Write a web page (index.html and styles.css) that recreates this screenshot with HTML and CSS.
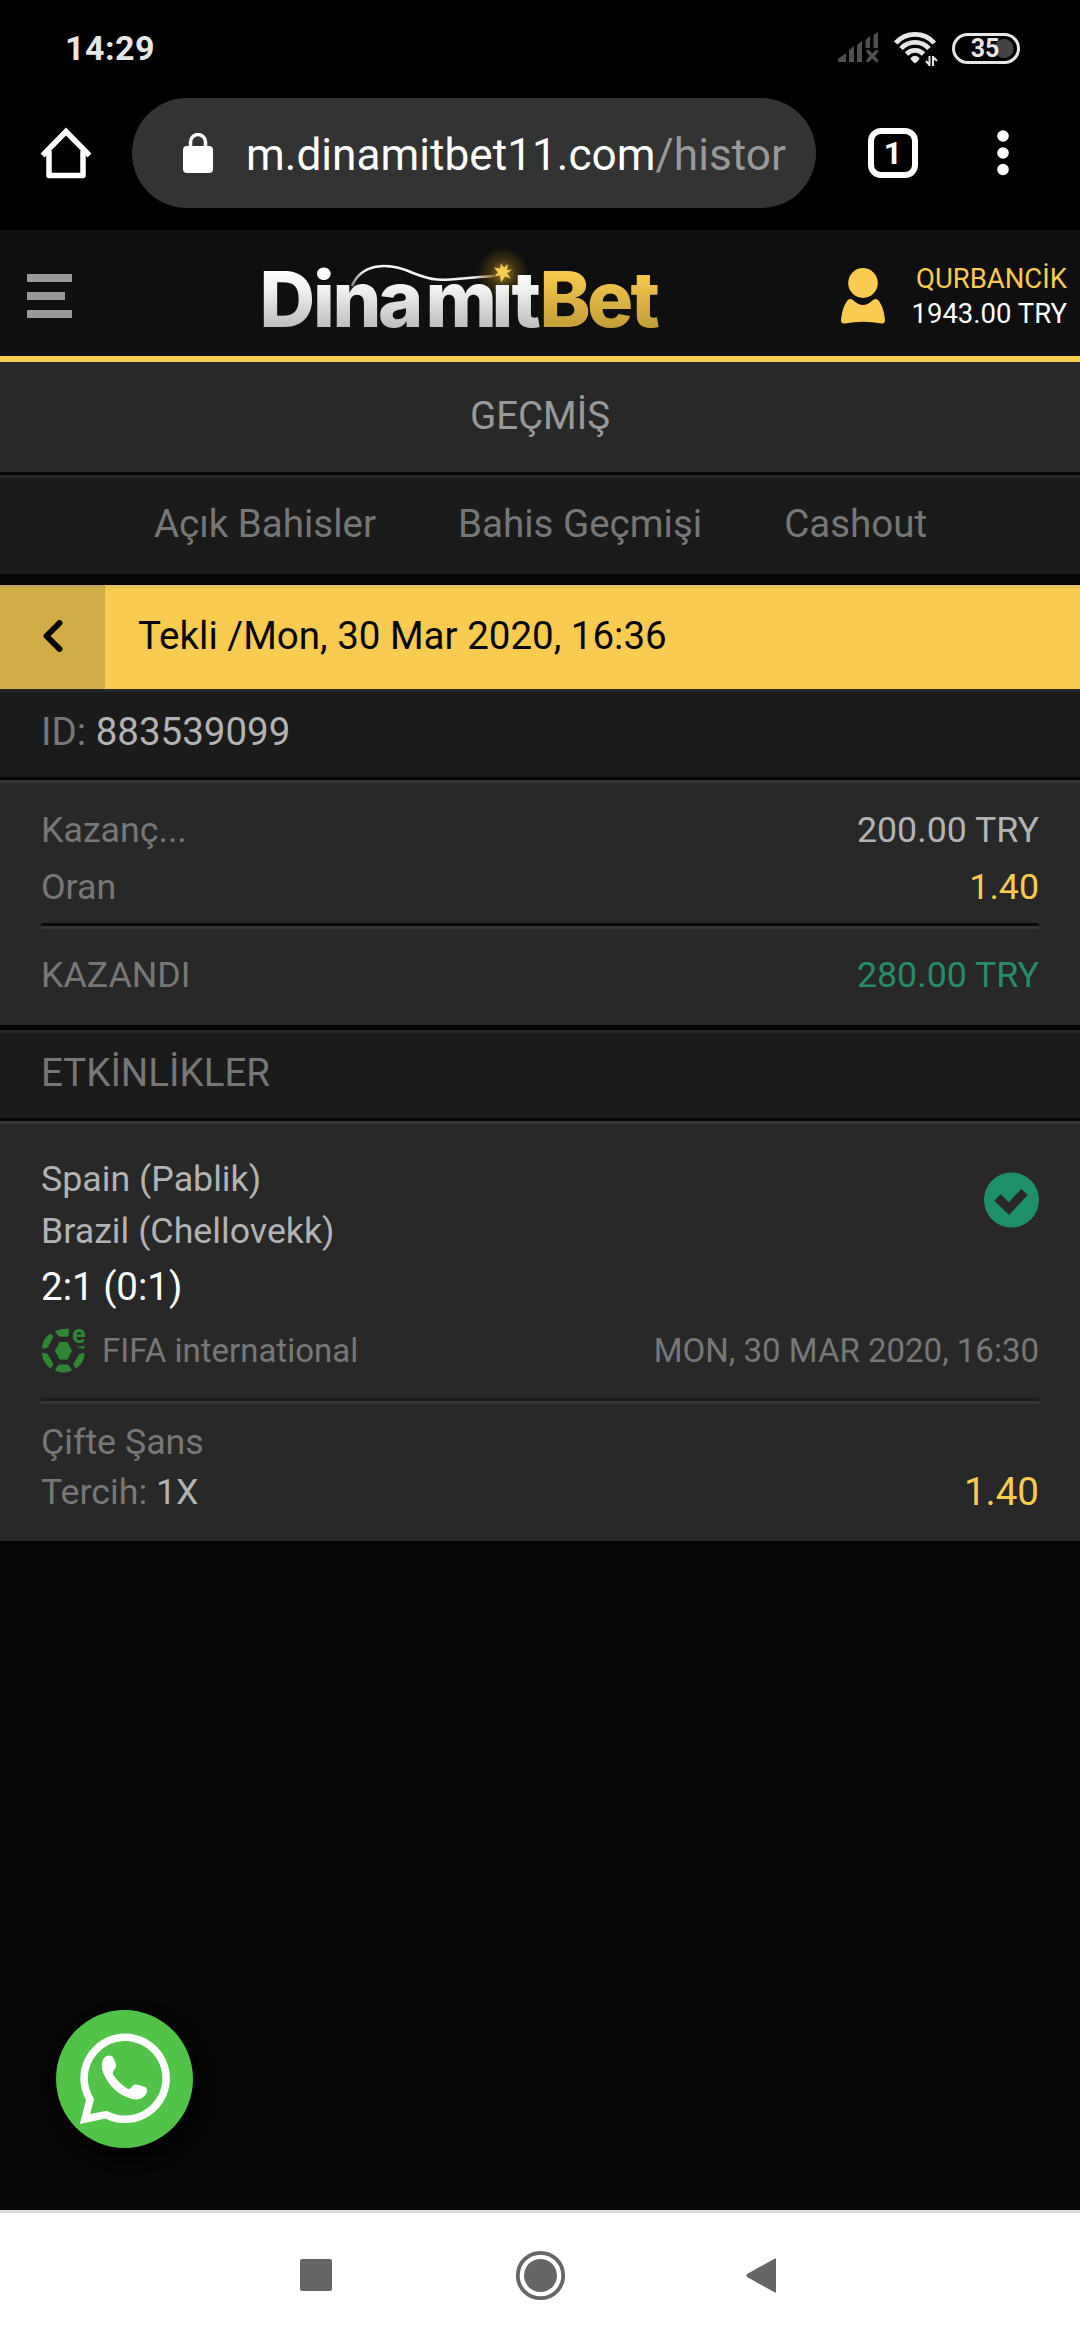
FILE: index.html
```html
<!DOCTYPE html>
<html lang="tr">
<head>
	<meta charset="utf-8">
	<title>DinamitBet</title>
	<link rel="stylesheet" href="styles.css">
</head>

<body>
	<div class="status-bar">
		<span class="clock">14:29</span>
		<div class="status-icons">
			<svg class="signal" width="42" height="32" viewBox="0 0 42 32">
				<path fill="#505050" d="M0 30v-3l8-6v9zM11 30V18l5-4v16zM19 30V13l5-4v21zM27.500 16V8l4.500-4v12zM35.500 16V3L40 0v16z"/>
				<path stroke="#505050" stroke-width="3.400" stroke-linecap="round" d="M30 19.500l8.500 9M38.500 19.500l-8.500 9"/>
			</svg>
			<svg class="wifi" width="44" height="36" viewBox="0 0 44 36">
				<g fill="none" stroke="#e6e6e6" stroke-width="4.800">
					<path d="M1.700 12a26 26 0 0 1 38.600 0"/>
					<path d="M7 17.500a19 19 0 0 1 28 0"/>
					<path d="M12.500 23a12 12 0 0 1 17 0"/>
				</g>
				<path fill="#e6e6e6" d="M16.500 27q4.500-4.500 9 0q0 2-4.500 5.500q-4.500-3.500-4.500-5.500z"/>
				<path fill="none" stroke="#e6e6e6" stroke-width="2" d="M35.500 25v10M35.500 34l-3.500-4M39 35V25M39 26l4 4"/>
			</svg>
			<span class="battery">35</span>
		</div>
	</div>

	<div class="browser-bar">
		<svg class="home" width="52" height="52" viewBox="0 0 52 52" fill="none" stroke="#fff" stroke-width="5.500" stroke-linejoin="round">
			<path d="M9 24v24.500h34V24"/>
			<path stroke-linejoin="miter" d="M2.500 28.500L26 4.500l23.500 24"/>
		</svg>
		<div class="url">
			<svg class="lock" width="30" height="40" viewBox="0 0 30 40">
				<rect y="13" width="30" height="27" rx="4" fill="#fff"/>
				<path d="M7.500 15V9a7.500 7.500 0 0 1 15 0v6" fill="none" stroke="#fff" stroke-width="3.500"/>
			</svg>
			<span class="address">m.dinamitbet11.com<span class="path">/histor</span></span>
		</div>
		<span class="tab-count">1</span>
		<svg class="more" width="12" height="46" viewBox="0 0 12 46" fill="#fff">
			<circle cx="6" cy="6" r="5.800"/>
			<circle cx="6" cy="23" r="5.800"/>
			<circle cx="6" cy="39.500" r="5.800"/>
		</svg>
	</div>

	<div class="header">
		<div class="menu">
			<span></span>
			<span class="short"></span>
			<span></span>
		</div>
		<svg class="logo" width="410" height="100" viewBox="0 0 410 100">
			<defs>
				<linearGradient id="silver" gradientUnits="userSpaceOnUse" x1="0" y1="25" x2="0" y2="82">
					<stop offset="0" stop-color="#fff"/>
					<stop offset=".3" stop-color="#f3f3f3"/>
					<stop offset="1" stop-color="#bebebe"/>
				</linearGradient>
				<linearGradient id="gold" gradientUnits="userSpaceOnUse" x1="0" y1="25" x2="0" y2="82">
					<stop offset="0" stop-color="#f9cb50"/>
					<stop offset="1" stop-color="#c39e38"/>
				</linearGradient>
				<linearGradient id="fuse" x1="0" x2="1" y1="0" y2="0">
					<stop offset="0" stop-color="#888"/>
					<stop offset=".1" stop-color="#fff"/>
					<stop offset=".85" stop-color="#eee"/>
					<stop offset="1" stop-color="#8a7340"/>
				</linearGradient>
				<radialGradient id="glow">
					<stop offset="0" stop-color="#f9cb50" stop-opacity=".6"/>
					<stop offset=".5" stop-color="#f9b820" stop-opacity=".2"/>
					<stop offset="1" stop-color="#f9b820" stop-opacity="0"/>
				</radialGradient>
			</defs>
			<circle cx="248" cy="28" r="26" fill="url(#glow)"/>
			<text class="logo-text" y="81.500" x="4.500 58 77.500 123 170.500 236.500 256.500" fill="url(#silver)">Dinamıt</text>
			<text class="logo-text" y="81.500" x="284.500 332 375.500" fill="url(#gold)">Bet</text>
			<path d="M97 41C106 19 132 16 158 28C186 39 188 34 239 31" fill="none" stroke="url(#fuse)" stroke-width="2.600"/>
			<path fill="#f9cb50" d="M253 19l-1 6 5-.5-5 4 4 5-6-2-4 6-1-7-6 1 4-4-4-5 6 1 1-5 3 4z"/>
		</svg>
		<div class="account">
			<svg width="44" height="56" viewBox="0 0 44 56" fill="#f9cb50">
				<ellipse cx="22" cy="15" rx="14.800" ry="15"/>
				<path d="M6 33Q8.500 29.500 12 32Q22 42 32 32Q35.500 29.500 38 33Q43 40 44 52Q44 56 40.500 55.500Q22 52 3.500 55.500Q0 56 0 52Q1 40 6 33z"/>
			</svg>
			<div class="balance">
				<span class="user">QURBANCİK</span>
				<span>1943.00 TRY</span>
			</div>
		</div>
	</div>

	<div class="page-title">GEÇMİŞ</div>

	<div class="tabs">
		<span class="tab-open">Açık Bahisler</span>
		<span class="tab-history">Bahis Geçmişi</span>
		<span class="tab-cashout">Cashout</span>
	</div>

	<div class="bet-bar">
		<div class="back">
			<svg width="20" height="32" viewBox="0 0 20 32">
				<path d="M16.500 3L3.500 16l13 13" fill="none" stroke="#050505" stroke-width="6" stroke-linejoin="round" stroke-linecap="round"/>
			</svg>
		</div>
		<span class="bet-name">Tekli /Mon, 30 Mar 2020, 16:36</span>
	</div>

	<div class="strip bet-id">ID:&nbsp;<span class="light">883539099</span></div>

	<div class="summary">
		<div class="row"><span>Kazanç...</span><span class="light">200.00 TRY</span></div>
		<div class="row"><span>Oran</span><span class="yellow">1.40</span></div>
		<div class="divider"></div>
		<div class="row result"><span>KAZANDI</span><span class="green">280.00 TRY</span></div>
	</div>

	<div class="strip events">ETKİNLİKLER</div>

	<div class="event">
		<div class="match">
			<div class="teams">
				<div>Spain (Pablik)</div>
				<div>Brazil (Chellovekk)</div>
			</div>
			<svg class="check" width="56" height="56" viewBox="0 0 56 56">
				<circle cx="28.500" cy="28" r="27.500" fill="#1d9068"/>
				<path d="M14.500 25.500l11.500 11L41.500 20" fill="none" stroke="#282828" stroke-width="9" stroke-linejoin="miter"/>
			</svg>
		</div>
		<div class="score">2:1 (0:1)</div>
		<div class="row league">
			<div class="league-name">
				<svg width="48" height="46" viewBox="0 0 48 46" fill="#2f8735">
					<path d="M18.500 15h8l4.500 8.800-4.500 8.700h-8L14 23.800z"/>
					<path d="M14 4Q20 1.500 28 1.800L27.500 8.500Q27.500 9.800 26 9.800H19Q17 9.500 14 4z"/>
					<path d="M9.500 6.500Q12.500 9 12 10.500L7 20Q6 22 1 21.500Q1 12 9.500 6.500z"/>
					<path d="M1 26Q6 25.500 7 27.500L12 36.500Q12.500 38.500 9.500 41.500Q1.500 36 1 26z"/>
					<path d="M14 43.500Q16.500 38 19 37.500H26Q28.500 38 31 43.500Q22.500 47.500 14 43.500z"/>
					<path d="M43.700 26Q39 25.500 38 27.500L32.500 36.500Q32 38.500 35 41.500Q43.500 36 43.700 26z"/>
					<path d="M35 19Q39 20.500 43 18.500Q44 20 43.500 21.500Q38 22 35 19z"/>
					<text class="ball-e" x="31" y="15.500">e</text>
				</svg>
				<span>FIFA international</span>
			</div>
			<span class="date">MON, 30 MAR 2020, 16:30</span>
		</div>
		<div class="divider soft"></div>
		<div class="market">Çifte Şans</div>
		<div class="row pick">
			<span>Tercih: <span class="light">1X</span></span>
			<span class="yellow odd">1.40</span>
		</div>
	</div>

	<div class="whatsapp">
		<svg width="94" height="94" viewBox="0 0 94 94">
			<path d="M7 87L12 67.500A41 41 0 1 1 28 82.600z" fill="none" stroke="#fff" stroke-width="7.500"/>
			<path fill="#fff" d="M26 26Q30 22 34.500 24.500Q38.500 30.500 38 35.500Q34 39.500 35 42.500Q41 51.500 50 57Q52 57.500 55.500 53Q58 51 68 55.500Q70 57.500 68.500 61.500Q64 69 54 67Q34 61.500 25 40.500Q22 31 26 26z"/>
		</svg>
	</div>

	<div class="nav-bar">
		<svg width="1080" height="127" viewBox="0 0 1080 127" fill="#666">
			<rect x="300" y="46" width="32" height="32" rx="2"/>
			<circle cx="540.500" cy="62.500" r="22.700" fill="none" stroke="#666" stroke-width="3.800"/>
			<circle cx="540.500" cy="62.500" r="16.500"/>
			<path d="M776 46v33q0 1-1.500.3l-27-15q-2.500-1.800 0-3.600l27-15q1.500-.7 1.500.3z"/>
		</svg>
	</div>
</body>
</html>
```
FILE: styles.css
```css
* {
	box-sizing: border-box;
}

body {
	margin: 0;
	height: 2340px;
	display: flex;
	flex-direction: column;
	position: relative;
	overflow: hidden;
	background: #070506;
	color: #777;
	font-family: Roboto, sans-serif;
	font-size: 35.75px;
}

svg {
	display: block;
	flex-shrink: 0;
}

/* phone status bar */
.status-bar {
	height: 98px;
	padding: 0 60px 2px 65px;
	display: flex;
	align-items: center;
	justify-content: space-between;
	background: #000;
	color: #e6e6e6;
}

.clock {
	font-size: 34px;
	font-weight: 700;
	letter-spacing: 0.5px;
}

.status-icons {
	display: flex;
	align-items: center;
}

.wifi {
	margin: 2px 14px 0 14px;
}

.battery {
	width: 68px;
	height: 31px;
	border: 3px solid #e6e6e6;
	border-radius: 16px;
	padding-right: 2px;
	background: radial-gradient(circle at 49px 50%, #444 9px, #000 10px);
	color: #e6e6e6;
	font-size: 25px;
	font-weight: 700;
	line-height: 26px;
	text-align: center;
}

/* browser toolbar */
.browser-bar {
	height: 132px;
	padding: 0 71px 22px 40px;
	display: flex;
	align-items: center;
	background: #000;
}

.url {
	width: 684px;
	height: 110px;
	margin-left: 40px;
	padding-left: 51px;
	display: flex;
	align-items: center;
	border-radius: 55px;
	background: #333;
}

.address {
	margin-left: 33px;
	padding-top: 3px;
	white-space: nowrap;
	color: #fff;
	font-size: 44.2px;
}

.path {
	color: #999;
}

.tab-count {
	width: 50px;
	height: 50px;
	margin: 0 79px 0 52px;
	border: 6px solid #fff;
	border-radius: 13px;
	color: #fff;
	font-size: 32px;
	font-weight: 700;
	line-height: 38px;
	text-align: center;
}

/* site header */
.header {
	height: 132px;
	border-bottom: 6px solid #f9cb50;
	padding: 0 13px 0 27px;
	display: flex;
	align-items: center;
	background: #0f0f0f;
}

.menu {
	width: 45px;
	height: 44px;
	margin-top: 6px;
	display: flex;
	flex-direction: column;
	justify-content: space-between;
}

.menu span {
	height: 8px;
	background: #999;
}

.menu .short {
	width: 38px;
}

.logo {
	margin: 4px 0 0 183px;
}

.logo-text {
	font-family: Inter, sans-serif;
	font-size: 77px;
	font-weight: 800;
}

.account {
	flex: 1;
	display: flex;
	justify-content: space-between;
	align-items: center;
	margin: 5px 0 0 176px;
}

.balance {
	display: flex;
	flex-direction: column;
	text-align: right;
	color: #fff;
	font-size: 27.5px;
	line-height: 35px;
}

.user, .yellow {
	color: #f9cb50;
}

.page-title {
	height: 110px;
	padding-bottom: 3px;
	display: flex;
	align-items: center;
	justify-content: center;
	background: #282828;
	color: #999;
	font-size: 38.5px;
}

.tabs {
	height: 99px;
	margin-top: 3px;
	padding: 0 0 2px 154px;
	display: flex;
	align-items: center;
	gap: 82px;
	background: #1b1b1b;
	box-shadow: inset 0 3px #282828;
	font-size: 38.5px;
}

.bet-bar {
	height: 104px;
	margin-top: 11px;
	display: flex;
	align-items: center;
	background: #f9cb50;
	box-shadow: inset 0 3px #e8c063;
	color: #050505;
	font-size: 38.5px;
}

.back {
	width: 105px;
	height: 104px;
	padding: 0 0 3px 43px;
	display: flex;
	align-items: center;
	background: #d2ac45;
	box-shadow: inset 0 3px #c2a258;
}

.bet-name {
	margin-left: 33px;
	padding-bottom: 3px;
}

.strip {
	height: 88px;
	padding: 0 41px 3px;
	display: flex;
	align-items: center;
	background: #1b1b1b;
	box-shadow: inset 0 3px #282828;
	font-size: 38.5px;
}

.light {
	color: #b3b3b3;
}

.green {
	color: #278c68;
}

.summary {
	height: 245px;
	margin-top: 3px;
	padding: 22px 41px 0;
	background: #282828;
	box-shadow: inset 0 3px #353535;
}

.row {
	display: flex;
	justify-content: space-between;
	align-items: center;
	line-height: 57px;
}

.divider {
	height: 6px;
	margin-top: 7px;
	border-top: 3px solid #090909;
	border-bottom: 3px solid #353535;
}

.result {
	margin-top: 18px;
}

.events {
	margin-top: 5px;
}

/* event card */
.event {
	height: 420px;
	margin-top: 3px;
	padding: 32px 41px 0;
	background: #282828;
	box-shadow: inset 0 3px #363636;
}

.match {
	display: flex;
	justify-content: space-between;
	color: #b3b3b3;
	line-height: 52px;
}

.check {
	margin-top: 19px;
}

.score {
	color: #fff;
	font-size: 38.5px;
	line-height: 60px;
}

.league {
	height: 66px;
	font-size: 33px;
}

.league-name {
	display: flex;
	align-items: center;
	gap: 13px;
}

.ball-e {
	font-family: Roboto, sans-serif;
	font-size: 25px;
	font-weight: 700;
}

.soft {
	margin: 15px 0 13px;
	border-top-color: #1b1b1b;
}

.market, .pick {
	line-height: 50px;
}

.odd {
	font-size: 38.5px;
}

.whatsapp {
	position: absolute;
	left: 56px;
	top: 2010px;
	width: 137px;
	height: 138px;
	padding: 22px 0 0 22px;
	border-radius: 50%;
	background: #50c348;
	box-shadow: 6px 8px 16px #000;
}

.nav-bar {
	height: 130px;
	margin-top: auto;
	border-top: 3px solid #e0dce0;
	background: #fff;
}
```
